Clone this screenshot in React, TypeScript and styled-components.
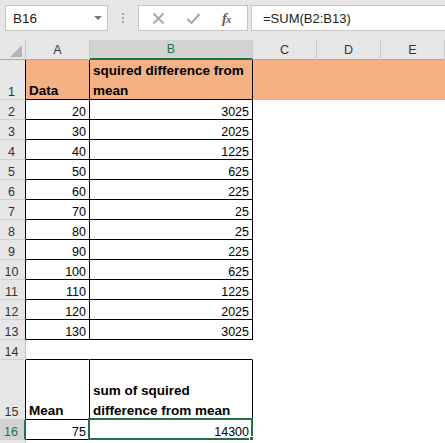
import React from 'react';
import styled, { createGlobalStyle } from 'styled-components';

const GlobalStyle = createGlobalStyle`
  * {
    box-sizing: border-box;
  }
  body {
    margin: 0;
    background: #ffffff;
    font-family: 'Liberation Sans', Arial, sans-serif;
    overflow: hidden;
  }
`;

const GREEN = '#217346';
const ORANGE = '#f4b183';

const Container = styled.div`
  width: 445px;
  height: 443px;
  overflow: hidden;
  background: #ffffff;
`;

const Toolbar = styled.div`
  height: 40px;
  background: #e6e6e6;
  display: flex;
  align-items: flex-start;
  padding: 5px 0 0 5px;
  overflow: hidden;
`;

const NameBox = styled.div`
  width: 103px;
  height: 26px;
  background: #ffffff;
  border: 1px solid #c6c6c6;
  display: flex;
  align-items: center;
  justify-content: space-between;
  padding: 0 5px 0 7px;
  font-size: 13.5px;
  color: #222222;
`;

const Caret = styled.span`
  width: 0;
  height: 0;
  border-left: 4px solid transparent;
  border-right: 4px solid transparent;
  border-top: 4px solid #7a7a7a;
`;

const Dots = styled.div`
  width: 30px;
  height: 26px;
  display: flex;
  flex-direction: column;
  align-items: center;
  justify-content: center;
  gap: 2px;

  span {
    width: 2px;
    height: 2px;
    background: #a6a6a6;
  }
`;

const Buttons = styled.div`
  width: 110px;
  height: 26px;
  background: #ffffff;
  border: 1px solid #c6c6c6;
  display: flex;
  align-items: center;
  gap: 21px;
  padding: 0 0 0 13px;
`;

const Fx = styled.span`
  font-family: 'Liberation Serif', 'Times New Roman', serif;
  font-style: italic;
  font-weight: 700;
  font-size: 15px;
  color: #606060;
  letter-spacing: -1px;

  sub {
    font-size: 11px;
    vertical-align: 0;
  }
`;

const FormulaInput = styled.div`
  flex: 1;
  height: 26px;
  margin-left: 3px;
  margin-right: -4px;
  background: #ffffff;
  border: 1px solid #c6c6c6;
  display: flex;
  align-items: center;
  padding-left: 11px;
  font-size: 13px;
  color: #222222;
`;

const Sheet = styled.div`
  display: grid;
  grid-template-columns: 26px 64px 163px 64px 64px 1fr;
`;

const Corner = styled.div`
  height: 20px;
  background: #e6e6e6;
  border-right: 1px solid #c6c6c6;
  border-bottom: 1px solid #ababab;
  position: relative;
`;

const ColHeader = styled.div<{ $selected?: boolean }>`
  height: 20px;
  background: ${(p) => (p.$selected ? '#d2d2d2' : '#e6e6e6')};
  color: ${(p) => (p.$selected ? GREEN : '#333333')};
  border-right: 1px solid #c6c6c6;
  border-bottom: ${(p) => (p.$selected ? `2px solid ${GREEN}` : '1px solid #ababab')};
  display: flex;
  align-items: center;
  justify-content: center;
  font-size: 12.5px;
`;

const RowHeader = styled.div<{ $selected?: boolean; $h: number; $edge?: boolean }>`
  height: ${(p) => p.$h}px;
  background: ${(p) => (p.$selected ? '#d2d2d2' : '#e6e6e6')};
  color: ${(p) => (p.$selected ? GREEN : '#333333')};
  border-right: ${(p) =>
    p.$selected ? `2px solid ${GREEN}` : p.$edge ? '1px solid #000000' : '1px solid #c6c6c6'};
  border-bottom: 1px solid #d0d0d0;
  display: flex;
  align-items: flex-end;
  justify-content: center;
  padding: 0 2px 0 0;
  font-size: 12.5px;
  line-height: 14px;
`;

const Cell = styled.div<{
  $h: number;
  $fill?: string;
  $boxed?: boolean;
  $under?: boolean;
  $right?: boolean;
}>`
  height: ${(p) => p.$h}px;
  background: ${(p) => p.$fill || '#ffffff'};
  border-right: 1px solid ${(p) => (p.$boxed ? '#000000' : 'transparent')};
  border-bottom: 1px solid ${(p) => (p.$boxed || p.$under ? '#000000' : 'transparent')};
  display: flex;
  flex-direction: column;
  justify-content: flex-end;
  align-items: ${(p) => (p.$right ? 'flex-end' : 'flex-start')};
  padding: 0 3px;
  color: #000000;
  position: relative;
`;

const Text = styled.span<{ $bold?: boolean }>`
  display: block;
  font-size: ${(p) => (p.$bold ? '13.5px' : '12.5px')};
  font-weight: ${(p) => (p.$bold ? 700 : 400)};
  line-height: ${(p) => (p.$bold ? '20px' : '14px')};
  margin-bottom: ${(p) => (p.$bold ? '-1.5px' : '0')};
`;

const Selection = styled.div`
  position: absolute;
  left: -2px;
  top: -2px;
  right: -1px;
  bottom: -1px;
  border: 2px solid ${GREEN};
  pointer-events: none;
`;

const Handle = styled.div`
  position: absolute;
  right: -4px;
  bottom: -4px;
  width: 6px;
  height: 6px;
  background: ${GREEN};
  border: 1px solid #ffffff;
`;

type Row = {
  n: number;
  label?: string;
  h: number;
  a?: React.ReactNode;
  b?: React.ReactNode;
  kind: 'head' | 'num' | 'gap' | 'blank';
  fill?: boolean;
  selected?: boolean;
};

const values: [number, number][] = [
  [20, 3025],
  [30, 2025],
  [40, 1225],
  [50, 625],
  [60, 225],
  [70, 25],
  [80, 25],
  [90, 225],
  [100, 625],
  [110, 1225],
  [120, 2025],
  [130, 3025],
];

const rows: Row[] = [
  { n: 1, h: 40, a: 'Data', b: 'squired difference from mean', kind: 'head', fill: true },
  ...values.map(([a, b], i) => ({ n: i + 2, h: 20, a, b, kind: 'num' as const })),
  { n: 14, h: 20, kind: 'gap' },
  { n: 15, h: 60, a: 'Mean', b: 'sum of squired difference from mean', kind: 'head' },
  { n: 16, h: 20, a: 75, b: 14300, kind: 'num', selected: true },
  { n: 17, label: '', h: 20, kind: 'blank' },
];

const XIcon = () => (
  <svg width="13" height="13" viewBox="0 0 13 13">
    <path d="M1.5 1.5 L11.5 11.5 M11.5 1.5 L1.5 11.5" stroke="#a6a6a6" strokeWidth="1.8" fill="none" />
  </svg>
);

const CheckIcon = () => (
  <svg width="15" height="13" viewBox="0 0 15 13">
    <path d="M1.5 7 L5.5 11 L13.5 2" stroke="#a6a6a6" strokeWidth="2" fill="none" />
  </svg>
);

const CornerMark = () => (
  <svg
    width="13"
    height="13"
    viewBox="0 0 13 13"
    style={{ position: 'absolute', left: 10, top: 5 }}
  >
    <polygon points="0,12 12,12 12,0" fill="#b4b4b4" />
  </svg>
);

const App = () => {
  return (
    <Container>
      <GlobalStyle />
      <Toolbar>
        <NameBox>
          B16
          <Caret />
        </NameBox>
        <Dots>
          <span />
          <span />
          <span />
        </Dots>
        <Buttons>
          <XIcon />
          <CheckIcon />
          <Fx>
            f<sub>x</sub>
          </Fx>
        </Buttons>
        <FormulaInput>=SUM(B2:B13)</FormulaInput>
      </Toolbar>
      <Sheet>
        <Corner>
          <CornerMark />
        </Corner>
        {['A', 'B', 'C', 'D', 'E'].map((c) => (
          <ColHeader key={c} $selected={c === 'B'}>
            {c}
          </ColHeader>
        ))}
        {rows.map((r) => {
          const boxed = r.kind === 'head' || r.kind === 'num';
          const bold = r.kind === 'head';
          const fill = r.fill ? ORANGE : undefined;
          const under = r.kind === 'gap';
          return (
            <React.Fragment key={r.n}>
              <RowHeader $h={r.h} $selected={r.selected} $edge={boxed}>
                {r.label ?? r.n}
              </RowHeader>
              <Cell $h={r.h} $fill={fill} $boxed={boxed} $under={under} $right={!bold}>
                {r.a !== undefined && <Text $bold={bold}>{r.a}</Text>}
              </Cell>
              <Cell $h={r.h} $fill={fill} $boxed={boxed} $under={under} $right={!bold}>
                {r.b !== undefined && <Text $bold={bold}>{r.b}</Text>}
                {r.selected && (
                  <Selection>
                    <Handle />
                  </Selection>
                )}
              </Cell>
              <Cell $h={r.h} $fill={fill} />
              <Cell $h={r.h} $fill={fill} />
              <Cell $h={r.h} $fill={fill} />
            </React.Fragment>
          );
        })}
      </Sheet>
    </Container>
  );
};

export default App;
